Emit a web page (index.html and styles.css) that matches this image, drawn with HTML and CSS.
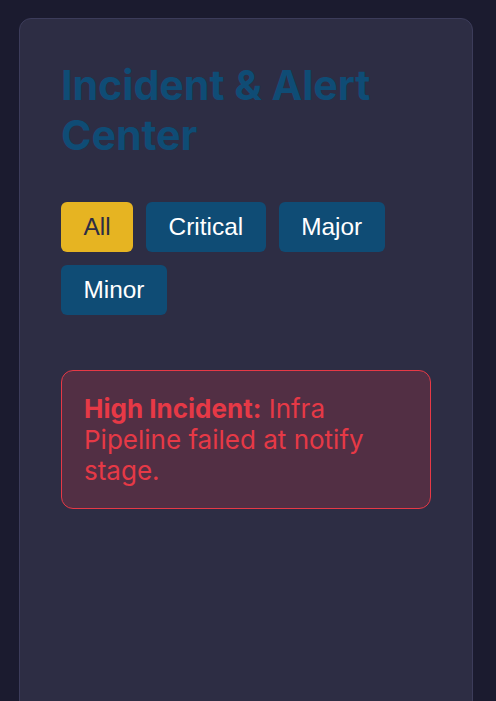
FILE: index.html
```html
<!DOCTYPE html>
<html lang="en">
<head>
<meta charset="utf-8">
<title>Incident &amp; Alert Center</title>
<link rel="stylesheet" href="styles.css">
</head>
<body>
<main class="card">
  <h1 class="title">Incident &amp; Alert Center</h1>
  <div class="filters">
    <button class="filter active">All</button>
    <button class="filter">Critical</button>
    <button class="filter">Major</button>
    <button class="filter">Minor</button>
  </div>
  <div class="alert"><strong>High Incident:</strong> Infra Pipeline failed at notify stage.</div>
</main>
</body>
</html>
```

FILE: styles.css
```css
html, body {
  margin: 0;
  padding: 0;
  background: #1b1b2f;
  height: 100%;
  overflow: hidden;
}
body {
  padding: 18px 23px 0 19px;
  box-sizing: border-box;
  font-family: Inter, "Noto Sans", sans-serif;
}
.card {
  background: #2d2d44;
  border: 1px solid #3c3c5a;
  border-radius: 12px;
  padding: 41px 41px 40px 41px;
  min-height: 800px;
  box-sizing: border-box;
}
.title {
  margin: 0;
  font-size: 41.1px;
  line-height: 50px;
  font-weight: 700;
  color: #0f4c75;
}
.filters {
  display: flex;
  flex-wrap: wrap;
  gap: 13px 13px;
  margin-top: 42px;
}
.filter {
  font-family: "Liberation Sans", Arial, sans-serif;
  font-size: 24.4px;
  line-height: 28px;
  padding: 11px 22.5px;
  border: none;
  border-radius: 6px;
  background: #0f4c75;
  color: #ffffff;
}
.filter.active {
  background: #e6b422;
  color: #2d2d44;
}
.alert {
  margin-top: 55px;
  background: rgba(230, 57, 70, 0.2);
  border: 1px solid #e63946;
  border-radius: 12px;
  padding: 22px;
  color: #e63946;
  font-size: 26px;
  line-height: 31px;
}
.alert strong {
  font-weight: 700;
}
```
